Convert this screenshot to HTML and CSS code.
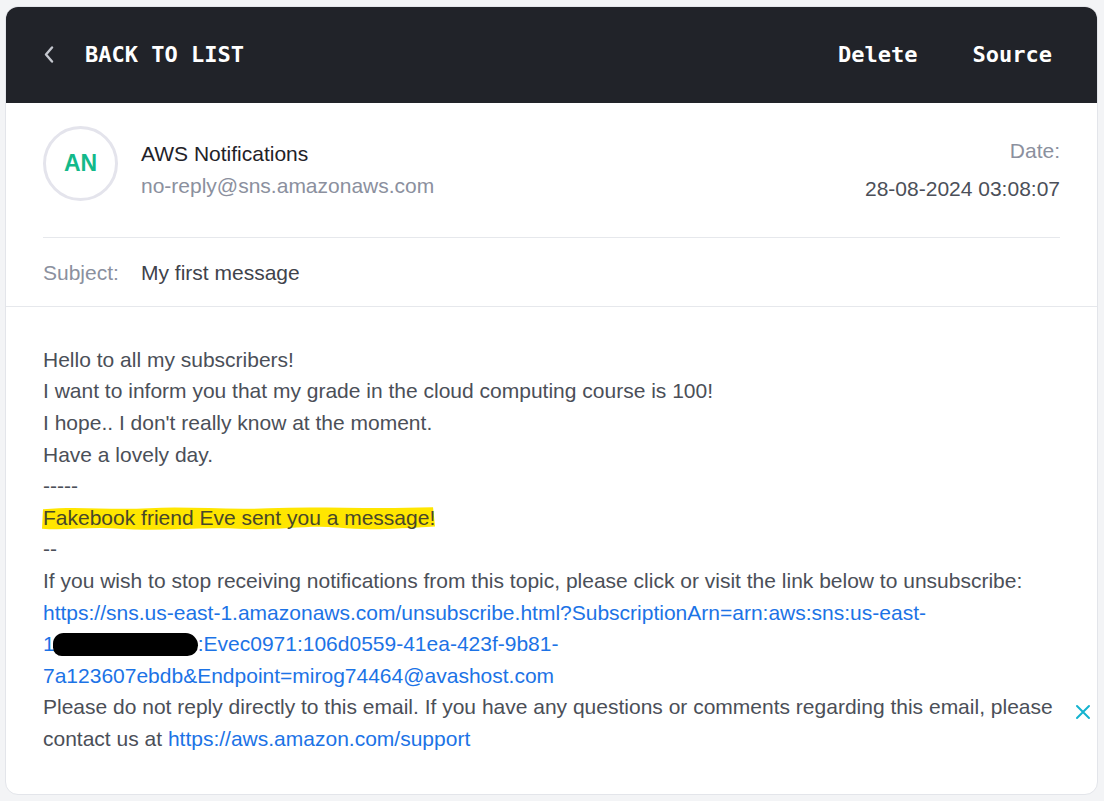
FILE: index.html
```html
<!DOCTYPE html>
<html lang="en">
<head>
<meta charset="utf-8">
<title>Message</title>
<link rel="stylesheet" href="styles.css">
</head>
<body>
<div class="card">
  <header class="topbar">
    <a class="back" href="#">
      <svg class="chev" width="10" height="17" viewBox="0 0 10 17"><polyline points="8,1.5 2,8.5 8,15.5" fill="none" stroke="#c4c7ce" stroke-width="2.4" stroke-linecap="round" stroke-linejoin="round"/></svg>
      <span>BACK TO LIST</span>
    </a>
    <nav class="actions">
      <a href="#">Delete</a>
      <a href="#">Source</a>
    </nav>
  </header>

  <section class="sender">
    <div class="avatar">AN</div>
    <div class="who">
      <div class="name">AWS Notifications</div>
      <div class="email">no-reply@sns.amazonaws.com</div>
    </div>
    <div class="date">
      <div class="label">Date:</div>
      <div class="value">28-08-2024 03:08:07</div>
    </div>
  </section>

  <section class="subject">
    <span class="label subj-label">Subject:</span>
    <span class="subj-value">My first message</span>
  </section>

  <section class="body">
    <div>Hello to all my subscribers!</div>
    <div>I want to inform you that my grade in the cloud computing course is 100!</div>
    <div>I hope.. I don't really know at the moment.</div>
    <div>Have a lovely day.</div>
    <div>-----</div>
    <div><span class="hl">Fakebook friend Eve sent you a message!</span></div>
    <div>--</div>
    <div>If you wish to stop receiving notifications from this topic, please click or visit the link below to unsubscribe:</div>
    <div><a class="link" href="#">https://sns.us-east-1.amazonaws.com/unsubscribe.html?SubscriptionArn=arn:aws:sns:us-east-<br>1<span class="redact"></span>:Evec0971:106d0559-41ea-423f-9b81-<br>7a123607ebdb&amp;Endpoint=mirog74464@avashost.com</a></div>
    <div>Please do not reply directly to this email. If you have any questions or comments regarding this email, please contact us at <a class="link" href="#">https://aws.amazon.com/support</a></div>
    <button class="close" aria-label="Close">
      <svg width="16" height="16" viewBox="0 0 16 16"><path d="M2 2 L14 14 M14 2 L2 14" stroke="#14b3cf" stroke-width="2" stroke-linecap="round"/></svg>
    </button>
  </section>
</div>
</body>
</html>
```

FILE: styles.css
```css
html, body {
  margin: 0;
  background: #f3f4f6;
}
body {
  padding: 6px 6px 5px 5px;
  font-family: "Liberation Sans", Arial, sans-serif;
}
.card {
  background: #ffffff;
  border: 1px solid #e3e5ea;
  border-radius: 13px;
  overflow: hidden;
  position: relative;
  min-height: calc(100vh - 12px);
  box-sizing: border-box;
}
.topbar {
  background: #212329;
  height: 97px;
  display: flex;
  align-items: center;
  justify-content: space-between;
  padding: 0 46px 0 39px;
  margin: -1px -1px 0 -1px;
  font-family: "DejaVu Sans Mono", monospace;
  font-weight: bold;
  font-size: 22px;
}
.topbar a {
  color: #ffffff;
  text-decoration: none;
}
.back {
  display: flex;
  align-items: center;
  gap: 31px;
}
.chev { display: block; }
.actions {
  display: flex;
  gap: 55px;
}
.sender {
  display: flex;
  align-items: flex-start;
  margin: 0 37px;
  padding: 23px 0 33px;
  border-bottom: 1px solid #e6e8ec;
  font-size: 21px;
  line-height: 31.6px;
}
.avatar {
  width: 75px;
  height: 75px;
  box-sizing: border-box;
  border: 3px solid #e4e4ec;
  border-radius: 50%;
  display: flex;
  align-items: center;
  justify-content: center;
  color: #13b98a;
  font-weight: bold;
  font-size: 23px;
  flex: none;
}
.who {
  margin-left: 23px;
  padding-top: 12px;
}
.name { color: #1f2228; }
.email { color: #8b909e; }
.date {
  margin-left: auto;
  text-align: right;
  padding-top: 9px;
}
.label { color: #8b909e; }
.date .value {
  color: #4b4f58;
  margin-top: 6px;
}
.subject {
  display: flex;
  padding: 19px 37px 17px;
  border-bottom: 1px solid #e6e8ec;
  font-size: 21px;
  line-height: 31.6px;
}
.subj-label { width: 98px; flex: none; }
.subj-value { color: #3f434b; }
.body {
  padding: 37px 37px 39px;
  color: #4b4f58;
  font-size: 21px;
  line-height: 31.6px;
  position: relative;
}
.hl {
  background-image: url("data:image/svg+xml,%3Csvg xmlns='http://www.w3.org/2000/svg' viewBox='0 0 400 26' preserveAspectRatio='none'%3E%3Cpath d='M3 4 C40 1 70 5 110 3 C150 1 190 5 230 3 C280 1 330 4 396 2 L398 20 C360 22 330 24 300 21 C270 18 240 24 200 22 C160 20 120 25 80 22 C50 20 25 24 2 22 Z' fill='%23ffe600'/%3E%3C/svg%3E");
  background-size: 100% 100%;
  background-repeat: no-repeat;
  color: #48472a;
  padding: 1px 2px 4px 3px;
  margin-left: -3px;
}
.link {
  color: #1c73e6;
  text-decoration: none;
}
.redact {
  display: inline-block;
  width: 145px;
  height: 23px;
  background: #000000;
  border-radius: 12px 14px 12px 10px;
  vertical-align: -5px;
  margin-left: -2px;
}
.close {
  position: absolute;
  right: 6px;
  bottom: 74px;
  background: none;
  border: 0;
  padding: 0;
  cursor: pointer;
}
.close svg { display: block; }
```
